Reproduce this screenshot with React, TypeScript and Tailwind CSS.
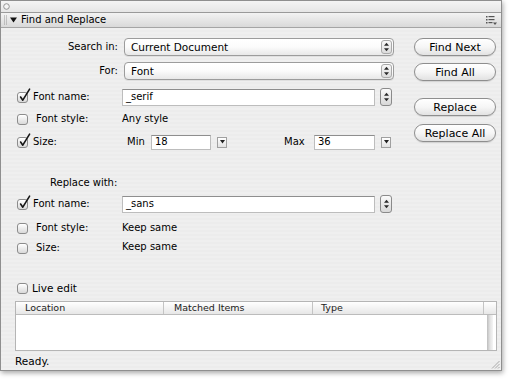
import React from "react";

function Arrows({ w = 7, h = 10 }: { w?: number; h?: number }) {
  return (
    <svg width={w} height={h} viewBox="0 0 7 10">
      <path d="M3.5 0.8 L6 3.8 L1 3.8Z" fill="#2a2a2a" />
      <path d="M3.5 9.2 L6 6.2 L1 6.2Z" fill="#2a2a2a" />
    </svg>
  );
}

function Check({ checked }: { checked?: boolean }) {
  return (
    <span className="relative inline-block w-[11px] h-[11px] rounded-[3px] border border-[#8c8c8c] bg-linear-to-b from-white to-[#d9d9d9] shrink-0 shadow-[inset_0_1px_0_#fff]">
      {checked && (
        <svg className="absolute left-[-1px] top-[-6px]" width="15" height="16" viewBox="0 0 15 16">
          <path
            d="M3.6 10 L5.8 13.2 L12.6 2.2"
            fill="none"
            stroke="#151515"
            strokeWidth="1.6"
            strokeLinecap="round"
            strokeLinejoin="round"
          />
        </svg>
      )}
    </span>
  );
}

function Popup({ text }: { text: string }) {
  return (
    <div className="w-[270px] h-[18px] rounded-[4px] border border-[#9c9c9c] bg-linear-to-b from-white via-[#fbfbfb] to-[#e8e8e8] flex items-center pl-[6px] shadow-[0_1px_0_rgba(0,0,0,0.06)]">
      <span className="flex-1 text-[10.5px]">{text}</span>
      <div className="w-[11px] h-[14px] mr-[1px] rounded-[3px] border border-[#a9a9a9] bg-linear-to-b from-[#f8f8f8] to-[#dcdcdc] flex items-center justify-center">
        <Arrows />
      </div>
    </div>
  );
}

function Btn({ children }: { children: React.ReactNode }) {
  return (
    <div className="w-[82px] h-[18px] rounded-full border border-[#8e8e8e] bg-linear-to-b from-white via-[#f6f6f6] to-[#e2e2e2] flex items-center justify-center shadow-[0_1px_1px_rgba(0,0,0,0.12)] text-[11px]">
      {children}
    </div>
  );
}

function Field({ w, h = 17, text }: { w: number; h?: number; text: string }) {
  return (
    <div
      className="bg-white border border-[#bdbdbd] border-t-[#8e8e8e] flex items-center pl-[3px] shrink-0"
      style={{ width: w, height: h }}
    >
      {text}
    </div>
  );
}

function Stepper() {
  return (
    <div className="w-[12px] h-[18px] rounded-[3px] border border-[#8a8a8a] bg-linear-to-b from-[#fafafa] to-[#d8d8d8] flex items-center justify-center shrink-0">
      <Arrows />
    </div>
  );
}

function MiniDrop() {
  return (
    <div className="w-[10px] h-[11px] border border-[#a0a0a0] bg-linear-to-b from-white to-[#e2e2e2] flex items-center justify-center shrink-0">
      <svg width="5" height="4" viewBox="0 0 5 4">
        <path d="M0 0 L5 0 L2.5 3.5Z" fill="#222" />
      </svg>
    </div>
  );
}

function CheckLabel({ checked, label, extra = 0 }: { checked?: boolean; label: string; extra?: number }) {
  return (
    <div className="w-[121px] flex items-center shrink-0">
      <span className="ml-[16px] flex">
        <Check checked={checked} />
      </span>
      <span style={{ marginLeft: 5 + extra }}>{label}</span>
    </div>
  );
}

export default function App() {
  return (
    <div className="w-[510px] h-[381px] bg-white relative overflow-hidden font-['DejaVu_Sans','Liberation_Sans',sans-serif] text-[10px] leading-none text-black">
      <div className="w-[502px] h-[371px] border border-[#8f8f8f] flex flex-col shadow-[1px_2px_5px_rgba(0,0,0,0.35)] relative bg-[#eeeeee]">
        {/* top strip */}
        <div className="h-[12px] bg-linear-to-b from-[#f4f4f4] to-[#e6e6e6] border-b border-[#9a9a9a] flex items-center pl-[2px] shrink-0">
          <svg width="7" height="7" viewBox="0 0 7 7">
            <circle cx="3.5" cy="3.5" r="2.8" fill="#f4f4f4" stroke="#8a8a8a" strokeWidth="0.9" />
          </svg>
        </div>
        {/* header */}
        <div className="h-[15px] bg-linear-to-b from-[#f3f3f3] to-[#d9d9d9] border-b border-[#a5a5a5] flex items-center shrink-0">
          <svg className="ml-[3px]" width="3" height="10" viewBox="0 0 3 10">
            {[1, 3, 5, 7, 9].map((y) => (
              <g key={y}>
                <rect x="0" y={y - 0.5} width="1" height="1" fill="#9a9a9a" />
                <rect x="2" y={y - 0.5} width="1" height="1" fill="#9a9a9a" />
              </g>
            ))}
          </svg>
          <svg className="ml-[3px]" width="7" height="6" viewBox="0 0 7 6">
            <path d="M0 0.5 L7 0.5 L3.5 5.5Z" fill="#111" />
          </svg>
          <span className="ml-[4px]">Find and Replace</span>
          <div className="flex-1" />
          <svg className="mr-[4px]" width="11" height="9" viewBox="0 0 11 9">
            <rect x="0" y="0" width="1.5" height="1.5" fill="#555" />
            <rect x="2.5" y="0" width="6" height="1.2" fill="#555" />
            <rect x="0" y="3" width="1.5" height="1.5" fill="#555" />
            <rect x="2.5" y="3" width="6" height="1.2" fill="#555" />
            <rect x="0" y="6" width="1.5" height="1.5" fill="#555" />
            <rect x="2.5" y="6" width="4" height="1.2" fill="#555" />
            <path d="M7 6.5 L11 6.5 L9 9Z" fill="#555" />
          </svg>
        </div>

        {/* content */}
        <div className="flex-1 flex flex-col bg-[repeating-linear-gradient(180deg,#efefef_0px,#efefef_2px,#ececec_2px,#ececec_4px)]">
          <div className="flex">
            <div className="flex flex-col w-[413px]">
              <div className="mt-[10px] h-[18px] flex items-center">
                <span className="w-[117px] text-right">Search in:</span>
                <span className="ml-[6px]">
                  <Popup text="Current Document" />
                </span>
              </div>
              <div className="mt-[6px] h-[18px] flex items-center">
                <span className="w-[117px] text-right">For:</span>
                <span className="ml-[6px]">
                  <Popup text="Font" />
                </span>
              </div>
              <div className="mt-[8px] h-[18px] flex items-center">
                <CheckLabel checked label="Font name:" />
                <Field w={253} text="_serif" />
                <span className="ml-[5px] flex">
                  <Stepper />
                </span>
              </div>
              <div className="mt-[4px] h-[18px] flex items-center">
                <CheckLabel label="Font style:" extra={3} />
                <span>Any style</span>
              </div>
              <div className="mt-[5px] h-[18px] flex items-center">
                <CheckLabel checked label="Size:" />
                <span className="w-[29px] pl-[5px]">Min</span>
                <Field w={60} h={15} text="18" />
                <span className="ml-[6px] flex">
                  <MiniDrop />
                </span>
                <span className="ml-[57px] w-[30px]">Max</span>
                <Field w={61} h={15} text="36" />
                <span className="ml-[6px] flex">
                  <MiniDrop />
                </span>
              </div>
            </div>
            <div className="flex flex-col">
              <div className="mt-[10px]">
                <Btn>Find Next</Btn>
              </div>
              <div className="mt-[7px]">
                <Btn>Find All</Btn>
              </div>
              <div className="mt-[17px]">
                <Btn>Replace</Btn>
              </div>
              <div className="mt-[8px]">
                <Btn>Replace All</Btn>
              </div>
            </div>
          </div>

          <div className="mt-[23px] h-[18px] flex items-center">
            <span className="ml-[49px]">Replace with:</span>
          </div>
          <div className="mt-[3px] h-[18px] flex items-center">
            <CheckLabel checked label="Font name:" />
            <Field w={253} text="_sans" />
            <span className="ml-[5px] flex">
              <Stepper />
            </span>
          </div>
          <div className="mt-[6px] h-[18px] flex items-center">
            <CheckLabel label="Font style:" extra={3} />
            <span>Keep same</span>
          </div>
          <div className="mt-[2px] h-[18px] flex items-center">
            <CheckLabel label="Size:" extra={3} />
            <span className="mt-[-3px]">Keep same</span>
          </div>

          <div className="mt-[22px] h-[18px] flex items-center">
            <span className="ml-[16px] flex">
              <Check />
            </span>
            <span className="ml-[4px] text-[10.5px]">Live edit</span>
          </div>

          <div className="mt-[4px] ml-[14px] w-[482px] h-[50px] border border-[#b5b5b5] flex flex-col bg-white shrink-0">
            <div className="h-[13px] flex bg-linear-to-b from-white to-[#e7e7e7] border-b border-[#bcbcbc] text-[9.5px] text-[#222] shrink-0">
              <div className="w-[148px] border-r border-[#c4c4c4] flex items-center pl-[9px]">Location</div>
              <div className="w-[149px] border-r border-[#c4c4c4] flex items-center pl-[10px]">Matched Items</div>
              <div className="flex-1 border-r border-[#c4c4c4] flex items-center pl-[8px]">Type</div>
              <div className="w-[12px]" />
            </div>
            <div className="flex-1 flex">
              <div className="flex-1" />
              <div className="w-[12px] flex justify-center">
                <div className="w-[6px] h-full bg-linear-to-r from-[#bdbdbd] via-[#e2e2e2] to-[#f5f5f5]" />
              </div>
            </div>
          </div>

          <div className="mt-[3px] h-[15px] flex items-center shrink-0">
            <span className="ml-[14px] text-[10.5px]">Ready.</span>
          </div>
        </div>

        <svg className="absolute right-[1px] bottom-[1px]" width="9" height="9" viewBox="0 0 9 9">
          <path d="M8.5 1 L1 8.5 M8.5 4 L4 8.5 M8.5 7 L7 8.5" stroke="#9a9a9a" strokeWidth="0.8" />
        </svg>
      </div>
    </div>
  );
}
